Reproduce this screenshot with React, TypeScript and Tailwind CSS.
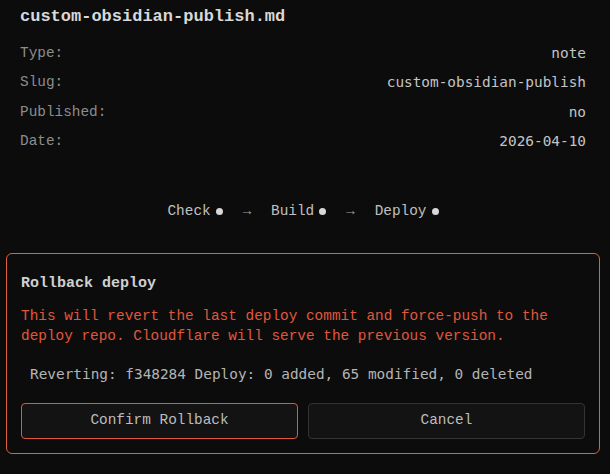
import React from "react";

const labelFont = "font-['Liberation_Mono',monospace]";
const valueFont = "font-['DejaVu_Sans_Mono',monospace]";

const meta = [
    { label: "Type:", value: "note" },
    { label: "Slug:", value: "custom-obsidian-publish" },
    { label: "Published:", value: "no" },
    { label: "Date:", value: "2026-04-10" },
];

const steps = ["Check", "Build", "Deploy"];

const App = () => {
    return (
        <div className="min-h-screen w-full bg-[#0c0c0c] text-[#d0d0d0]">
            <div className="w-[600px] pt-[6px] pl-[6px]">
                <div className="px-[14px]">
                    <h1 className={`${labelFont} text-[17px] font-bold leading-[22px] text-[#d8d8d8]`}>
                        custom-obsidian-publish.md
                    </h1>
                    <div className="mt-[11px] flex flex-col">
                        {meta.map((row) => (
                            <div key={row.label} className="flex h-[29.5px] items-center justify-between text-[14.4px]">
                                <span className={`${labelFont} text-[#8c8c8c]`}>{row.label}</span>
                                <span className={`${valueFont} text-[#c4c4c4]`}>{row.value}</span>
                            </div>
                        ))}
                    </div>
                </div>

                <div className={`${labelFont} mt-[44px] flex items-center justify-center text-[14.4px] leading-[20px] text-[#c0c0c0]`}>
                    {steps.map((step, i) => (
                        <React.Fragment key={step}>
                            {i > 0 && <span className="mx-[20px] text-[14px] text-[#a0a0a0]">→</span>}
                            <span className="flex items-center gap-[5px]">
                                {step}
                                <span className="h-[7px] w-[7px] rounded-full bg-[#d8d8d8]" />
                            </span>
                        </React.Fragment>
                    ))}
                </div>

                <div className="mt-[32px] w-[594px] rounded-[6px] border border-[#e0603a] px-[14px] pb-[14px] pt-[19px]">
                    <div className={`${labelFont} text-[15px] font-bold leading-[22px] text-[#d0d0d0]`}>Rollback deploy</div>
                    <p className={`${labelFont} mt-[11px] text-[14.4px] leading-[20px] text-[#e0583c]`}>
                        This will revert the last deploy commit and force-push to the deploy repo. Cloudflare will serve the previous version.
                    </p>
                    <div className={`${valueFont} mt-[18px] pl-[9px] text-[14.4px] leading-[20px] text-[#b4b4b4]`}>
                        Reverting: f348284 Deploy: 0 added, 65 modified, 0 deleted
                    </div>
                    <div className="mt-[19px] flex gap-[10px]">
                        <button className={`${labelFont} h-[36px] flex-1 rounded-[4px] border border-[#e0583c] bg-[#131313] text-[14.4px] text-[#bdbdbd]`}>
                            Confirm Rollback
                        </button>
                        <button className={`${labelFont} h-[36px] flex-1 rounded-[4px] border border-[#333333] bg-[#131313] text-[14.4px] text-[#bdbdbd]`}>
                            Cancel
                        </button>
                    </div>
                </div>
            </div>
        </div>
    );
};

export default App;
